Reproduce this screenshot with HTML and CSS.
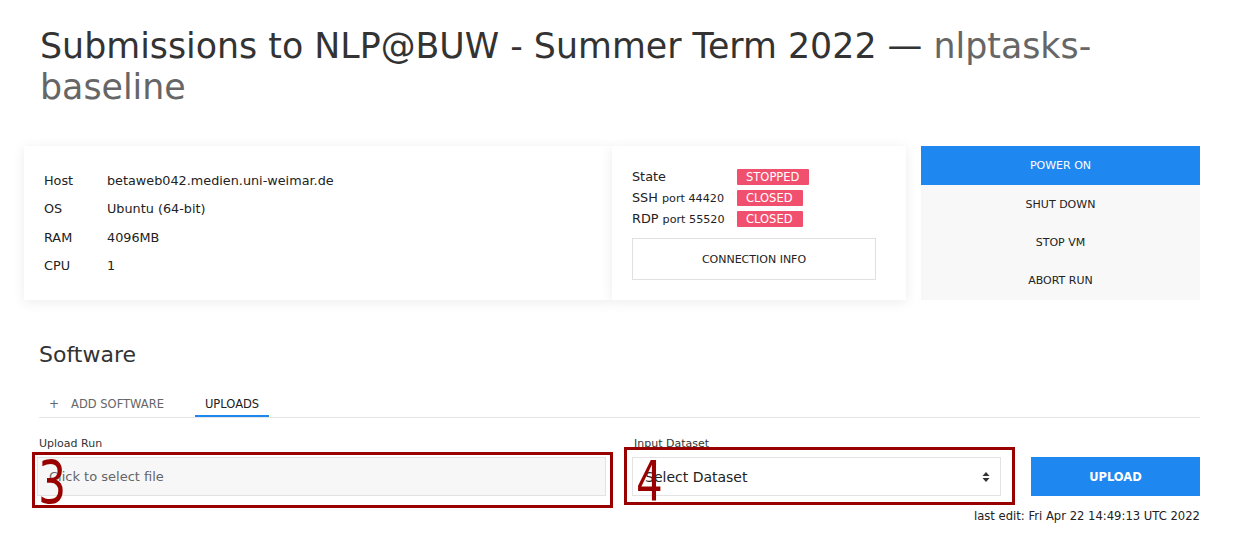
FILE: index.html
```html
<!DOCTYPE html>
<html>
<head>
<meta charset="utf-8">
<link rel="stylesheet" href="styles.css">
</head>
<body>
<div class="page">
  <h1 class="title">Submissions to NLP@BUW - Summer Term 2022 — <span class="sub">nlptasks-baseline</span></h1>

  <div class="vm-row">
    <div class="card info">
      <table class="spec">
        <tr><td class="k">Host</td><td>betaweb042.medien.uni-weimar.de</td></tr>
        <tr><td class="k">OS</td><td>Ubuntu (64-bit)</td></tr>
        <tr><td class="k">RAM</td><td>4096MB</td></tr>
        <tr><td class="k">CPU</td><td>1</td></tr>
      </table>
    </div>
    <div class="card state">
      <div class="srow"><span class="sl">State</span><span class="badge">STOPPED</span></div>
      <div class="srow"><span class="sl">SSH <small>port 44420</small></span><span class="badge">CLOSED</span></div>
      <div class="srow"><span class="sl">RDP <small>port 55520</small></span><span class="badge">CLOSED</span></div>
      <div class="conn">CONNECTION INFO</div>
    </div>
    <div class="actions">
      <div class="act primary">POWER ON</div>
      <div class="act">SHUT DOWN</div>
      <div class="act">STOP VM</div>
      <div class="act">ABORT RUN</div>
    </div>
  </div>

  <h2 class="section">Software</h2>
  <div class="tabs">
    <div class="tab"><span class="plus">+</span>ADD SOFTWARE</div>
    <div class="tab active">UPLOADS</div>
  </div>

  <div class="upload-row">
    <div class="field">
      <label class="lbl">Upload Run</label>
      <div class="file">Click to select file</div>
      <div class="anno anno3"><span class="num">3</span></div>
    </div>
    <div class="field">
      <label class="lbl">Input Dataset</label>
      <div class="select">Select Dataset<span class="arrows"><svg width="8" height="12" viewBox="0 0 8 12"><path d="M4 1 L7.5 5 H0.5 Z M4 11 L7.5 7 H0.5 Z" fill="#333"/></svg></span></div>
      <div class="anno anno4"><span class="num">4</span></div>
    </div>
    <div class="field btnfield">
      <div class="upload">UPLOAD</div>
    </div>
  </div>
  <div class="lastedit">last edit: Fri Apr 22 14:49:13 UTC 2022</div>
</div>
</body>
</html>
```

FILE: styles.css
```css
* { box-sizing: border-box; }
body {
  margin: 0;
  background: #fff;
  font-family: "DejaVu Sans", Verdana, sans-serif;
  color: #222;
}
.page {
  width: 1176px;
  margin-left: 24px;
  padding-top: 26px;
}
.title {
  margin: 0 0 0 16px;
  font-weight: normal;
  font-size: 34.8px;
  line-height: 41px;
  color: #333;
  width: 1080px;
}
.title .sub { color: #666; }

.vm-row {
  display: flex;
  margin-top: 38px;
  height: 154px;
}
.card {
  background: #fff;
  box-shadow: 0 2px 12px rgba(0,0,0,0.08);
}
.info {
  width: 588px;
  padding: 20px 20px;
}
.spec { border-collapse: collapse; font-size: 12.8px; color: #222; }
.spec td { height: 28.5px; padding: 0; }
.spec td.k { width: 63px; }
.state {
  width: 294px;
  padding: 20px 20px 0 20px;
}
.srow {
  display: flex;
  align-items: center;
  height: 21px;
  font-size: 12.8px;
}
.srow small { font-size: 11.2px; }
.sl { width: 105px; }
.badge {
  background: #f0506e;
  color: #fff;
  font-size: 11.5px;
  line-height: 16px;
  padding: 0 10px 0 9px;
  border-radius: 1px;
}
.conn {
  margin-top: 9px;
  width: 244px;
  height: 42px;
  border: 1px solid #e0e0e0;
  display: flex;
  align-items: center;
  justify-content: center;
  font-size: 11px;
  color: #222;
}
.actions {
  margin-left: 15px;
  width: 279px;
  background: #f8f8f8;
  display: flex;
  flex-direction: column;
}
.act {
  height: 38px;
  display: flex;
  align-items: center;
  justify-content: center;
  font-size: 11px;
  color: #222;
}
.act.primary { background: #1e87f0; color: #fff; height: 39px; }

.section {
  margin: 41px 0 0 15px;
  font-weight: normal;
  font-size: 22px;
  line-height: 28px;
  color: #333;
}
.tabs {
  margin: 23px 0 0 15px;
  display: flex;
  border-bottom: 1px solid #e5e5e5;
  height: 26px;
}
.tab {
  padding: 0 10px;
  font-size: 11.5px;
  color: #666;
  line-height: 24px;
  margin-right: 21px;
}
.tab .plus { margin: 0 12px 0 0; font-size: 12px; }
.tab.active { color: #222; border-bottom: 2px solid #1e87f0; }

.upload-row {
  display: grid;
  grid-template-columns: 569px 369px 173px;
  column-gap: 26px;
  margin: 19px 0 0 13px;
  align-items: end;
}
.field { position: relative; }
.btnfield { padding-left: 4px; }
.lbl {
  display: block;
  font-size: 11px;
  color: #333;
  margin-left: 2px;
  line-height: 14px;
  margin-bottom: 6px;
}
.file {
  height: 39px;
  background: #f7f7f7;
  border: 1px solid #e3e3e3;
  display: flex;
  align-items: center;
  padding-left: 11px;
  font-size: 13px;
  color: #666;
}
.select {
  height: 39px;
  background: #fff;
  border: 1px solid #e3e3e3;
  display: flex;
  align-items: center;
  justify-content: space-between;
  padding: 0 10px 0 12px;
  font-size: 14px;
  color: #222;
}
.arrows { display: flex; }
.upload {
  height: 39px;
  background: #1e87f0;
  color: #fff;
  display: flex;
  align-items: center;
  justify-content: center;
  font-size: 11.5px;
  font-weight: bold;
}
.lastedit {
  text-align: right;
  font-size: 11.6px;
  color: #222;
  margin-top: 13px;
}
.anno {
  position: absolute;
  border: 3px solid #990000;
}
.anno3 { left: -5px; top: 15px; width: 581px; height: 56px; }
.anno4 { left: -8px; top: 10px; width: 391px; height: 58px; }
.num {
  position: absolute;
  font-family: "DejaVu Sans Condensed", "Liberation Sans Narrow", sans-serif;
  color: #990000;
  font-size: 58px;
  line-height: 1;
  transform: scaleX(0.85);
  transform-origin: left top;
}
.anno3 .num { left: 3px; top: -1px; }
.anno4 .num { left: 9px; top: 4px; font-size: 55px; }
```
